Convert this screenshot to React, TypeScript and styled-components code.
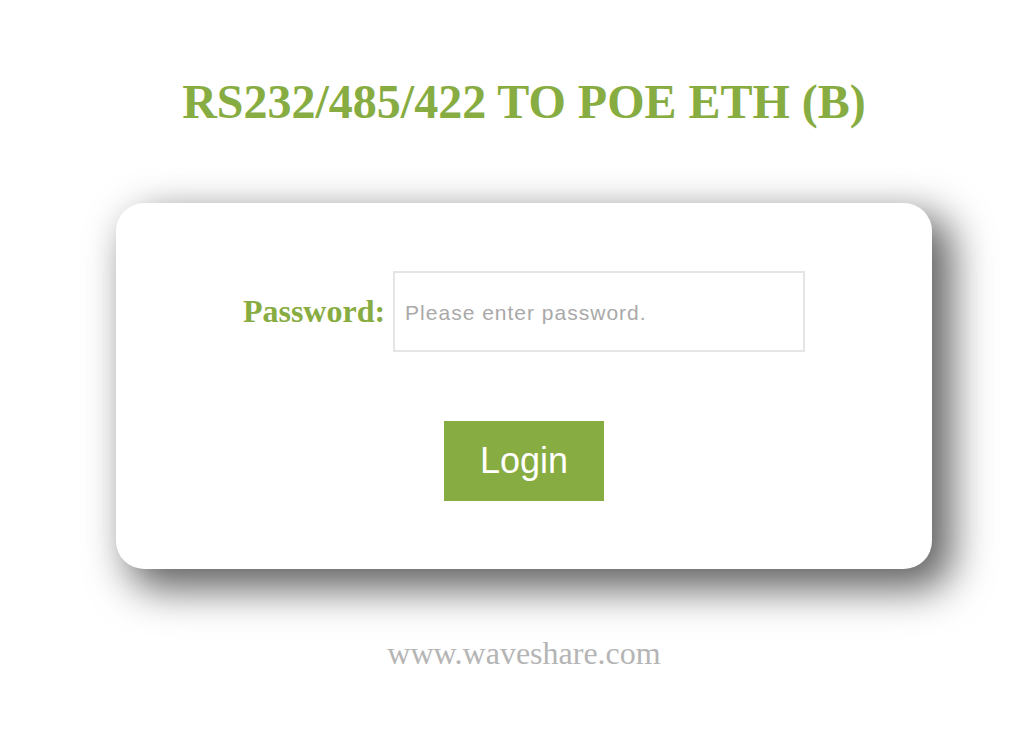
import React from "react";
import styled, { createGlobalStyle } from "styled-components";

const GlobalStyle = createGlobalStyle`
  html, body {
    margin: 0;
    padding: 0;
    background: #ffffff;
  }
  body {
    font-family: "Liberation Serif", "Times New Roman", serif;
  }
  input::placeholder {
    color: #a9a9a9;
    opacity: 1;
  }
`;

const Page = styled.div`
  display: flex;
  flex-direction: column;
  align-items: center;
  padding: 78px 0 0 30px;
`;

const Title = styled.h1`
  margin: 0;
  font-family: "Liberation Serif", "Times New Roman", serif;
  font-weight: bold;
  font-size: 48px;
  line-height: 48px;
  color: #87ac41;
  white-space: nowrap;
`;

const Card = styled.div`
  box-sizing: border-box;
  width: 816px;
  margin-top: 77px;
  padding: 68px 0;
  background: #ffffff;
  border-radius: 28px;
  box-shadow: 16px 16px 40px 4px rgba(0, 0, 0, 0.62);
  display: flex;
  flex-direction: column;
  align-items: center;
  gap: 69px;
`;

const FieldRow = styled.div`
  display: flex;
  align-items: center;
  gap: 8px;
`;

const Label = styled.label`
  font-family: "Liberation Serif", "Times New Roman", serif;
  font-weight: bold;
  font-size: 32px;
  color: #87ac41;
`;

const PasswordInput = styled.input`
  box-sizing: border-box;
  width: 412px;
  height: 81px;
  border: 2px solid #e5e5e5;
  padding: 2px 10px 0;
  font-family: "Liberation Sans", Arial, sans-serif;
  font-size: 21px;
  letter-spacing: 1px;
  color: #333;
  outline: none;
  background: #fff;
`;

const LoginButton = styled.button`
  width: 160px;
  height: 80px;
  border: none;
  background: #87ac41;
  color: #ffffff;
  font-family: "Liberation Sans", Arial, sans-serif;
  font-size: 36px;
  cursor: pointer;
  padding: 0;
`;

const Footer = styled.div`
  margin-top: 68px;
  font-family: "Liberation Serif", "Times New Roman", serif;
  font-size: 32px;
  line-height: 32px;
  color: #b5b5b5;
`;

export default function App() {
  return (
    <>
      <GlobalStyle />
      <Page>
        <Title>RS232/485/422 TO POE ETH (B)</Title>
        <Card>
          <FieldRow>
            <Label htmlFor="pwd">Password:</Label>
            <PasswordInput
              id="pwd"
              type="password"
              placeholder="Please enter password."
            />
          </FieldRow>
          <LoginButton>Login</LoginButton>
        </Card>
        <Footer>www.waveshare.com</Footer>
      </Page>
    </>
  );
}
